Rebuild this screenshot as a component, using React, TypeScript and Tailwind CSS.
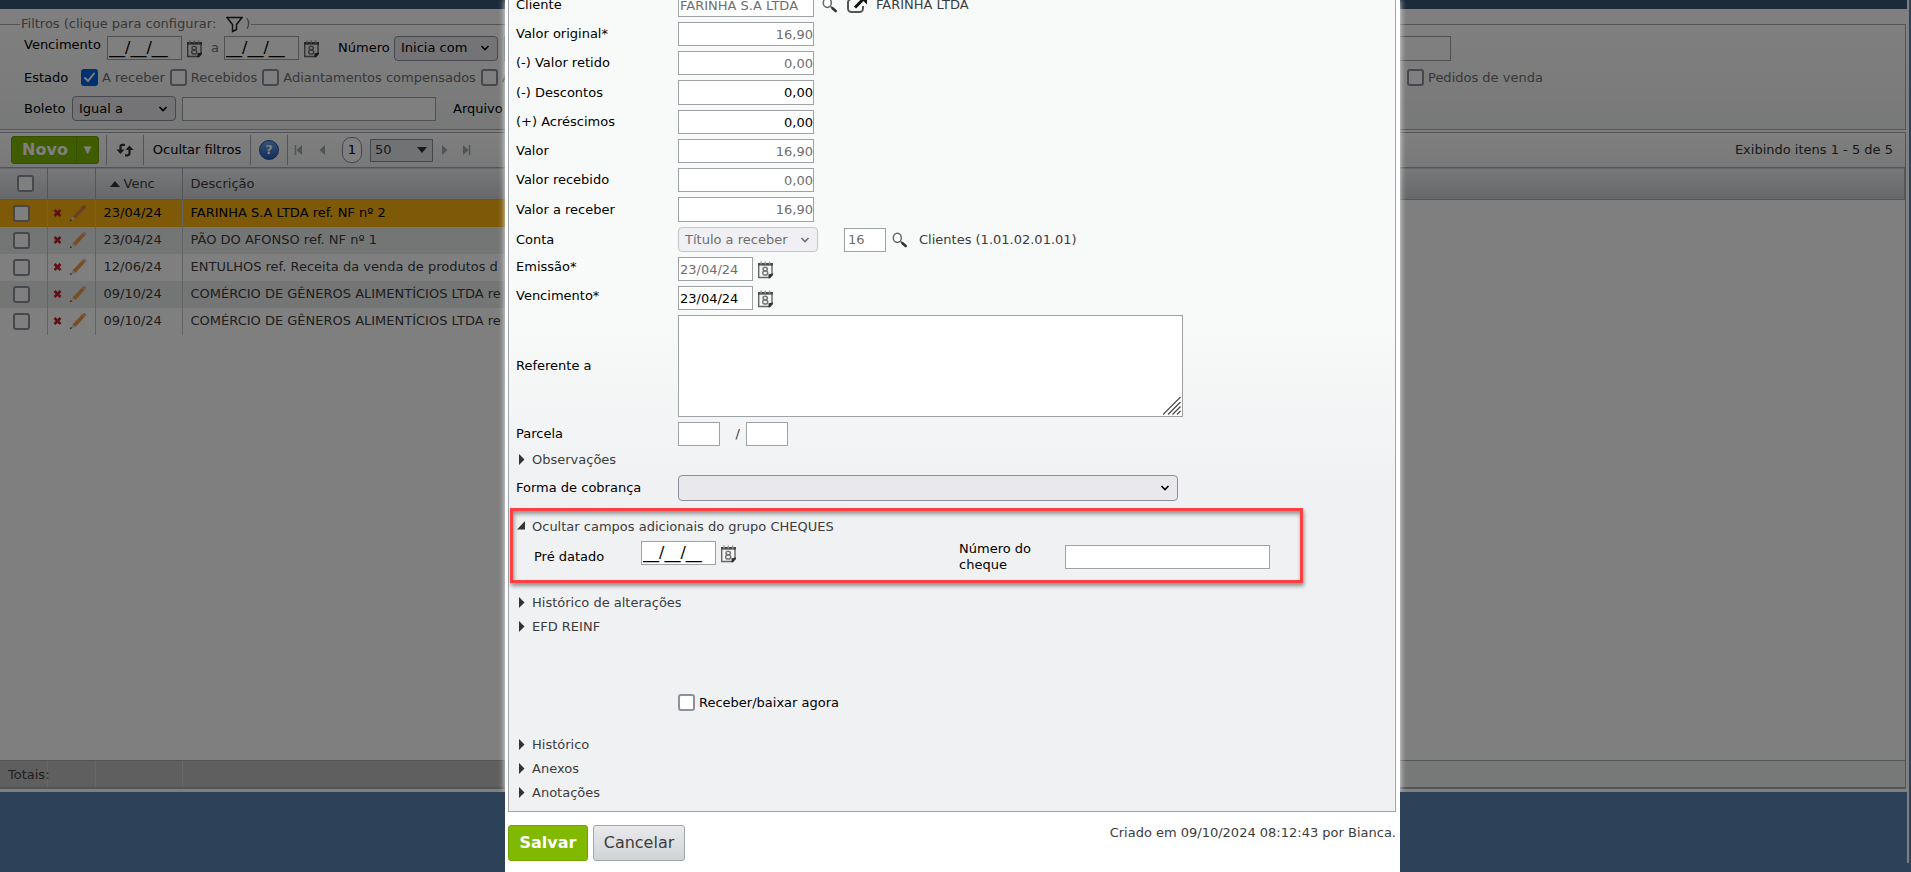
import * as React from "react";

type IconProps = { className?: string };

function CalendarIcon({ className = "" }: IconProps) {
  return (
    <svg viewBox="0 0 17 18" className={`h-[18px] w-[17px] shrink-0 ${className}`} aria-hidden="true">
      <path d="M1.700 3h13.300v10.500L12.500 16.500H1.700z" fill="#f6f6f6" stroke="#666" strokeWidth="1.400" />
      <path d="M1 2h15v2.600H1z" fill="#4a4a4a" />
      <path d="M4 0.500v3M8.300 0.500v3M12.600 0.500v3" stroke="#999" strokeWidth="1.400" />
      <path d="M16 12.500v1.500L13 17.200h-1.500v-4z" fill="#333" />
      <ellipse cx="8.200" cy="8" rx="2.200" ry="1.800" fill="none" stroke="#777" strokeWidth="1.500" />
      <ellipse cx="8.200" cy="12" rx="2.500" ry="2.100" fill="none" stroke="#777" strokeWidth="1.500" />
    </svg>
  );
}

function SearchIcon() {
  return (
    <svg viewBox="0 0 16 16" className="size-4 shrink-0" aria-hidden="true">
      <ellipse cx="5.300" cy="5.800" rx="4" ry="4.600" fill="#fff" stroke="#666" strokeWidth="1.500" />
      <path d="M8.500 9.500l1.500 1.200" stroke="#555" strokeWidth="1.600" />
      <path d="M10.500 11.200l3.200 2.800" stroke="#333" strokeWidth="2.600" strokeLinecap="round" />
    </svg>
  );
}

function EditIcon() {
  return (
    <svg viewBox="0 0 22 18" className="h-[18px] w-[22px] shrink-0" aria-hidden="true">
      <path d="M11 3H5.500A3.500 3.500 0 0 0 2 6.500v6A3.500 3.500 0 0 0 5.500 16h8a3.500 3.500 0 0 0 3.500-3.500V10" fill="none" stroke="#555" strokeWidth="2" />
      <path d="M9 11.500l8-8" stroke="#111" strokeWidth="3" />
      <path d="M13 0.500h8v8z" fill="#111" />
    </svg>
  );
}

function FilterIcon() {
  return (
    <svg viewBox="0 0 17 17" className="h-[17px] w-[17px] shrink-0" aria-hidden="true">
      <path d="M1 1.500h15L10.500 8.500v5L6.500 15.500v-7z" fill="none" stroke="#222" strokeWidth="1.500" />
    </svg>
  );
}

function PencilIcon({ dark }: { dark?: boolean }) {
  return (
    <svg viewBox="0 0 18 18" className="size-[18px] shrink-0" aria-hidden="true">
      <path d="M3.500 12.500L13 2.500l3 2L6.500 15z" fill={dark ? "#d8843f" : "#ee9c46"} />
      <path d="M12.500 3l1.500-1.500q1.500-1 2.700.200 1 1.300-.200 2.300L15.500 5z" fill={dark ? "#c97a50" : "#f0aa80"} />
      <path d="M3.500 12.500l3 2.500L1 17z" fill="#e8d6c0" />
      <path d="M1.800 15L3 16.300 0.700 17.300z" fill="#333" />
    </svg>
  );
}

function DeleteIcon() {
  return (
    <svg viewBox="0 0 9 8" className="h-2 w-[9px] shrink-0" aria-hidden="true">
      <path d="M1.500 1l6 6M7.500 1l-6 6" stroke="#c01f28" strokeWidth="2.600" />
    </svg>
  );
}

function RefreshIcon() {
  return (
    <svg viewBox="0 0 18 14" className="h-3.5 w-[18px]" aria-hidden="true">
      <path d="M9 1.800H6.500Q4.500 1.800 4.500 4v4" fill="none" stroke="#333" strokeWidth="2.200" />
      <path d="M0.500 6.500h8l-4 4.500z" fill="#333" />
      <path d="M9 12.300h2.500q2 0 2-2.200V6" fill="none" stroke="#333" strokeWidth="2.200" />
      <path d="M9.500 7h8l-4-4.500z" fill="#333" />
    </svg>
  );
}

function Chevron({ className = "" }: IconProps) {
  return (
    <svg
      viewBox="0 0 10 6"
      className={`pointer-events-none absolute top-1/2 h-1.5 w-2.5 -translate-y-1/2 ${className}`}
      aria-hidden="true"
    >
      <path d="M1.500 1L5 4.500 8.500 1" fill="none" stroke="currentColor" strokeWidth="1.600" />
    </svg>
  );
}

function NavIcon({ label, last, flip }: { label: string; last?: boolean; flip?: boolean }) {
  return (
    <button type="button" aria-label={label}>
      <svg viewBox="0 0 9 10" className={`h-2.5 w-[9px] ${flip ? "rotate-180" : ""}`} aria-hidden="true">
        <path d="M1 0l5.500 5L1 10z" fill="#a0a4ac" />
        {last && <path d="M7.500 0v10" stroke="#a0a4ac" strokeWidth="1.500" />}
      </svg>
    </button>
  );
}

const field = "border border-[#9fa2a5] bg-white outline-none";

function Check({ label, checked, className = "" }: { label: string; checked?: boolean; className?: string }) {
  return (
    <label className={`flex shrink-0 items-center gap-1 whitespace-nowrap ${className}`}>
      <Box checked={checked} />
      {label}
    </label>
  );
}

function Box({ checked, label }: { checked?: boolean; label?: string }) {
  return (
    <span className="relative block size-[17px] shrink-0">
      <input
        type="checkbox"
        aria-label={label}
        defaultChecked={checked}
        className="peer block size-[17px] appearance-none rounded-[3px] border-2 border-[#8f8f9d] bg-white checked:border-[#0060df] checked:bg-[#0060df]"
      />
      <svg
        viewBox="0 0 17 17"
        className="pointer-events-none absolute inset-0 hidden size-[17px] peer-checked:block"
        aria-hidden="true"
      >
        <path d="M4 9l3 3 6-7.500" fill="none" stroke="#fff" strokeWidth="2" strokeLinecap="round" />
      </svg>
    </span>
  );
}

function Select({ label, value, className }: { label: string; value: string; className: string }) {
  return (
    <span className={`relative block shrink-0 text-black ${className}`}>
      <select
        aria-label={label}
        className="block h-[25px] w-full appearance-none rounded border border-[#8f8f9d] bg-[#e9e9ed] pl-1.5 outline-none"
      >
        <option>{value}</option>
      </select>
      <Chevron className="right-2" />
    </span>
  );
}

function DateField({
  label,
  value,
  muted,
  id,
  className = "",
}: {
  label: string;
  value?: string;
  muted?: boolean;
  id?: string;
  className?: string;
}) {
  return (
    <span className={`flex shrink-0 items-center gap-1 ${className}`}>
      <input
        id={id}
        aria-label={label}
        defaultValue={value ?? "__/__/__"}
        className={`h-6 w-[75px] pl-px ${field} ${value ? "" : "text-base"} ${muted ? "text-[#6e6e6e]" : "text-black"}`}
      />
      <CalendarIcon className="mt-0.5" />
    </span>
  );
}

function Filters() {
  return (
    <fieldset className="mr-px border border-l-0 border-[#a6a9b2] bg-linear-to-b from-white to-[#eff2f0] pb-1 pl-6">
      <legend className="-ml-1 flex h-5 items-center px-px text-[#707070]">
        Filtros (clique para configurar:
        <button type="button" aria-label="Configurar filtros" className="ml-2.5">
          <FilterIcon />
        </button>
        <span className="ml-0.5">)</span>
      </legend>
      <div className="-mt-px flex h-[30px] items-center text-black">
        <span className="w-[83px] self-start pt-1">Vencimento</span>
        <DateField label="Vencimento inicial" />
        <span className="w-[21px] pl-2 text-[#707070]">a</span>
        <DateField label="Vencimento final" />
        <span className="ml-[18px] w-14">Número</span>
        <Select label="Número" value="Inicia com" className="w-[104px]" />
        <input aria-label="Valor do número" className={`ml-1.5 h-[25px] w-[947px] ${field}`} />
      </div>
      <div className="flex h-[29px] items-center text-[#707070]">
        <span className="w-[57px] text-black">Estado</span>
        <div className="flex w-[1326px] gap-[5px] overflow-hidden">
          <Check label="A receber" checked />
          <Check label="Recebidos" />
          <Check label="Adiantamentos compensados" />
          <Check label="A" />
        </div>
        <Check label="Pedidos de venda" />
      </div>
      <div className="flex h-[33px] items-center text-black">
        <span className="w-12">Boleto</span>
        <Select label="Boleto" value="Igual a" className="w-[104px]" />
        <input aria-label="Valor do boleto" className={`ml-1.5 h-6 w-[254px] ${field}`} />
        <span className="ml-[17px]">Arquivo</span>
      </div>
    </fieldset>
  );
}

function Toolbar() {
  return (
    <div className="flex h-[35px] items-center border-t border-[#a6a9b2] bg-linear-to-b from-white to-[#eff1f0] text-black">
      <div className="mr-[7px] ml-[11px] flex h-7 overflow-hidden rounded-[3px] border border-[#6f9f00] bg-[#80b900] font-bold text-white">
        <button type="button" className="w-16 pl-0.5 text-base">
          Novo
        </button>
        <button type="button" aria-label="Mais opções" className="w-[22px] border-l border-[#6f9f00] text-[10px]">
          ▼
        </button>
      </div>
      <div className="flex h-[30px] items-center divide-x divide-[#a6a9b2] border-x border-[#a6a9b2] *:h-full">
        <button type="button" aria-label="Atualizar" className="flex w-[37px] items-center justify-center">
          <RefreshIcon />
        </button>
        <button type="button" className="w-[107px]">
          Ocultar filtros
        </button>
        <button type="button" aria-label="Ajuda" className="flex w-9 items-center justify-center">
          <span className="flex size-5 items-center justify-center rounded-full border border-[#1d4e9c] bg-linear-to-b from-[#6ba2ea] to-[#2560b8] font-bold text-white">
            ?
          </span>
        </button>
      </div>
      <div className="flex items-center pl-1.5">
        <NavIcon label="Primeira" last flip />
        <span className="flex pl-3.5">
          <NavIcon label="Anterior" flip />
        </span>
        <button type="button" className="mr-2 ml-4 h-[26px] w-5 rounded-[9px] border border-[#8b8f98] bg-white">
          1
        </button>
        <span className="relative mr-2 block w-[63px] text-[#333]">
          <select
            aria-label="Itens por página"
            className="block h-[23px] w-full appearance-none border border-[#8b8f98] bg-[#e2e5e8] pl-1 outline-none"
          >
            <option>50</option>
          </select>
          <svg viewBox="0 0 10 6" className="pointer-events-none absolute top-2 right-1.5 h-1.5 w-2.5" aria-hidden="true">
            <path d="M0 0h10L5 6z" fill="#333" />
          </svg>
        </span>
        <NavIcon label="Próxima" />
        <span className="flex pl-3">
          <NavIcon label="Última" last />
        </span>
      </div>
      <span className="mr-3 ml-auto text-[#333]">Exibindo itens 1 - 5 de 5</span>
    </div>
  );
}

const rows = [
  { date: "23/04/24", text: "FARINHA S.A LTDA ref. NF nº 2" },
  { date: "23/04/24", text: "PÃO DO AFONSO ref. NF nº 1" },
  { date: "12/06/24", text: "ENTULHOS ref. Receita da venda de produtos d" },
  { date: "09/10/24", text: "COMÉRCIO DE GÊNEROS ALIMENTÍCIOS LTDA re" },
  { date: "09/10/24", text: "COMÉRCIO DE GÊNEROS ALIMENTÍCIOS LTDA re" },
];

function Titles() {
  return (
    <table className="w-full table-fixed border-collapse text-left text-[#3c3c3c]">
      <colgroup>
        <col className="w-[47px]" />
        <col className="w-12" />
        <col className="w-[87px]" />
        <col className="w-1/2" />
        <col />
      </colgroup>
      <thead>
        <tr className="h-8 border-y border-[#a6a9b2] bg-linear-to-b from-[#edf0f4] to-[#cdd0d3] *:border-r *:border-[#a6a9b2] *:font-normal">
          <th className="pl-[17px]">
            <Box label="Selecionar todos" />
          </th>
          <th></th>
          <th className="pl-3.5">
            <span className="flex items-center gap-1">
              <svg viewBox="0 0 10 6" className="h-1.5 w-2.5" aria-hidden="true">
                <path d="M0 6h10L5 0z" fill="#333" />
              </svg>
              Venc
            </span>
          </th>
          <th className="pl-2">Descrição</th>
          <th></th>
        </tr>
      </thead>
      <tbody>
        {rows.map((row, i) => (
          <tr
            key={i}
            className={`h-[27px] *:not-last:border-r *:not-last:border-[#c4c6ca] ${
              i === 0
                ? "text-black *:not-last:bg-[#fdb511]"
                : i % 2
                  ? "*:not-last:bg-[#e8ebea]"
                  : "*:not-last:bg-white"
            }`}
          >
            <td className="pl-[13px]">
              <Box label={`Selecionar ${row.text}`} />
            </td>
            <td className="pl-[5px]">
              <span className="flex items-center gap-[7px]">
                <DeleteIcon />
                <PencilIcon dark={i === 0} />
              </span>
            </td>
            <td className="pl-2">{row.date}</td>
            <td className="pl-2 whitespace-nowrap">{row.text}</td>
            <td></td>
          </tr>
        ))}
      </tbody>
    </table>
  );
}

function Totals() {
  return (
    <div className="mt-auto flex h-[29px] border-t border-b-2 border-[#a6a9b2] bg-[#eff3f1] text-[#3c3c3c]">
      <div className="flex w-3/5 items-stretch bg-[#bfbfbf]">
        <span className="w-12 border-r border-[#d2d2d2] pl-2 leading-7 whitespace-nowrap">Totais:</span>
        <span className="w-12 border-r border-[#d2d2d2]" />
        <span className="w-[87px] border-r border-[#d2d2d2]" />
      </div>
    </div>
  );
}

function Row({
  label,
  htmlFor,
  top,
  children,
}: {
  label: string;
  htmlFor: string;
  top?: boolean;
  children: React.ReactNode;
}) {
  return (
    <div className="flex items-center">
      <label htmlFor={htmlFor} className={`w-[162px] shrink-0 text-black ${top ? "self-start pt-0.5" : ""}`}>
        {label}
      </label>
      {children}
    </div>
  );
}

const amounts = [
  { id: "original", label: "Valor original*", value: "16,90" },
  { id: "retido", label: "(-) Valor retido", value: "0,00" },
  { id: "descontos", label: "(-) Descontos", value: "0,00", editable: true, tall: true },
  { id: "acrescimos", label: "(+) Acréscimos", value: "0,00", editable: true },
  { id: "valor", label: "Valor", value: "16,90" },
  { id: "recebido", label: "Valor recebido", value: "0,00" },
  { id: "receber", label: "Valor a receber", value: "16,90", tall: true },
];

function Toggle({ label, open }: { label: string; open?: boolean }) {
  return (
    <button type="button" className="flex h-6 items-center gap-1.5">
      <svg viewBox="0 0 10 14" className="h-3.5 w-2.5" aria-hidden="true">
        {open ? <path d="M9 1v8.500H1z" fill="#333" /> : <path d="M3 1l5.500 5.500L3 12z" fill="#333" />}
      </svg>
      {label}
    </button>
  );
}

function TitleForm() {
  return (
    <form className="-mt-[7px] flex w-[895px] flex-col bg-white pr-1 pl-[3px] text-[#3c3c3c]">
      <div className="border border-t-0 border-[#a0a5ad] bg-linear-to-b from-[#f8faf9] from-40% to-[#f0f1f3] to-60% pb-1.5">
        <div className="flex flex-col gap-[5px] pl-[7px]">
          <Row label="Cliente" htmlFor="cliente">
            <input id="cliente" defaultValue="FARINHA S.A LTDA" className={`h-6 w-[136px] pl-px text-[#6e6e6e] ${field}`} />
            <span className="ml-2 flex items-center gap-2">
              <SearchIcon />
              <EditIcon />
              <span>FARINHA LTDA</span>
            </span>
          </Row>
          {amounts.map((a) => (
            <Row key={a.id} label={a.label} htmlFor={a.id}>
              <input
                id={a.id}
                defaultValue={a.value}
                className={`w-[136px] text-right ${field} ${a.tall ? "h-[25px]" : "h-6"} ${
                  a.editable ? "text-black" : "text-[#6e6e6e]"
                }`}
              />
            </Row>
          ))}
          <Row label="Conta" htmlFor="conta">
            <span className="relative block text-[#6e6e6e]">
              <select
                id="conta"
                className="block h-[25px] w-[140px] appearance-none rounded border border-[#c4c4cc] bg-[#f0f0f4] pl-1.5 outline-none"
              >
                <option>Título a receber</option>
              </select>
              <Chevron className="right-2" />
            </span>
            <input aria-label="Código da conta" defaultValue="16" className={`mr-1.5 ml-[26px] h-6 w-[42px] pl-[3px] text-[#6e6e6e] ${field}`} />
            <SearchIcon />
            <span className="ml-[11px]">Clientes (1.01.02.01.01)</span>
          </Row>
          <Row label="Emissão*" htmlFor="emissao" top>
            <DateField id="emissao" label="Emissão" value="23/04/24" muted />
          </Row>
          <Row label="Vencimento*" htmlFor="vencimento" top>
            <DateField id="vencimento" label="Vencimento" value="23/04/24" />
          </Row>
          <Row label="Referente a" htmlFor="referente">
            <span className="relative block">
              <textarea id="referente" className={`block h-[102px] w-[505px] resize-none ${field}`} />
              <svg viewBox="0 0 18 18" className="pointer-events-none absolute right-0.5 bottom-0.5 size-[18px]" aria-hidden="true">
                <path d="M0 17.500L17.500 0M5 17.500L17.500 5M9.500 17.500l8-8M14 17.500l3.500-3.500" stroke="#444" strokeWidth="1.200" />
              </svg>
            </span>
          </Row>
          <Row label="Parcela" htmlFor="parcela">
            <input id="parcela" className={`h-6 w-[42px] ${field}`} />
            <span className="w-[26px] pr-1.5 text-right">/</span>
            <input aria-label="Total de parcelas" className={`h-6 w-[42px] ${field}`} />
          </Row>
        </div>
        <div className="pt-0.5 pl-[7px]">
          <Toggle label="Observações" />
          <div className="mt-[3px]">
            <Row label="Forma de cobrança" htmlFor="cobranca">
              <span className="relative block w-[500px] text-black">
                <select
                  id="cobranca"
                  className="block h-[26px] w-full appearance-none rounded border border-[#8f8f9d] bg-[#e9e9ed] outline-none"
                >
                  <option></option>
                </select>
                <Chevron className="right-2" />
              </span>
            </Row>
          </div>
        </div>
        <div className="mt-[7px] ml-px h-[75px] w-[793px] border-[3px] border-[#fb4141] pt-1 pl-[3px] shadow-[1px_3px_4px_rgba(0,0,0,0.4),inset_1px_3px_4px_rgba(0,0,0,0.4)]">
          <Toggle label="Ocultar campos adicionais do grupo CHEQUES" open />
          <div className="mt-0.5 flex h-8 items-center pl-[18px] text-black">
            <label htmlFor="predatado" className="w-[107px]">
              Pré datado
            </label>
            <DateField id="predatado" label="Pré datado" className="self-start" />
            <label htmlFor="cheque" className="ml-[222px] w-[106px] pr-6 leading-4">
              Número do cheque
            </label>
            <input id="cheque" className={`h-6 w-[205px] ${field}`} />
          </div>
        </div>
        <div className="mt-2 pl-[7px]">
          <Toggle label="Histórico de alterações" />
          <Toggle label="EFD REINF" />
          <Check label="Receber/baixar agora" className="mt-[55px] mb-[22px] ml-[162px] text-black" />
          <Toggle label="Histórico" />
          <Toggle label="Anexos" />
          <Toggle label="Anotações" />
        </div>
      </div>
      <div className="flex items-start pt-[13px]">
        <button type="button" className="h-9 w-20 rounded-[3px] border border-[#6fa300] bg-[#80b900] text-base font-bold text-white">
          Salvar
        </button>
        <button
          type="button"
          className="ml-[5px] h-9 w-[92px] rounded-[3px] border border-[#a0a5ad] bg-linear-to-b from-[#e9eaec] to-[#d0d3d6] text-base"
        >
          Cancelar
        </button>
        <span className="ml-auto">Criado em 09/10/2024 08:12:43 por Bianca.</span>
      </div>
    </form>
  );
}

export default function App() {
  return (
    <div className="relative h-screen overflow-hidden bg-[#5a82b2] font-['DejaVu_Sans','Verdana',sans-serif] text-[13px] leading-4">
      <div className="mr-[2px] h-[calc(100vh-9px)] border-r-2 border-white">
        <div className="flex h-[calc(100vh-80px)] flex-col bg-white pb-[3px]">
          <div className="h-[9px] shrink-0 bg-[#385674]" />
          <div className="pt-[5px]">
            <Filters />
          </div>
          <div className="mt-0.5 mr-px flex flex-1 flex-col border-r border-[#a6a9b2]">
            <Toolbar />
            <Titles />
            <Totals />
          </div>
        </div>
      </div>
      <div className="absolute inset-0 bg-black/50" />
      <div className="absolute inset-x-0 top-0 flex h-[calc(100vh-80px)] justify-center overflow-hidden pr-1.5">
        <div className="w-[895px] shadow-[0_0_6px_rgba(255,255,255,0.9)]" />
      </div>
      <div className="absolute inset-0 flex justify-center pr-1.5">
        <TitleForm />
      </div>
    </div>
  );
}
